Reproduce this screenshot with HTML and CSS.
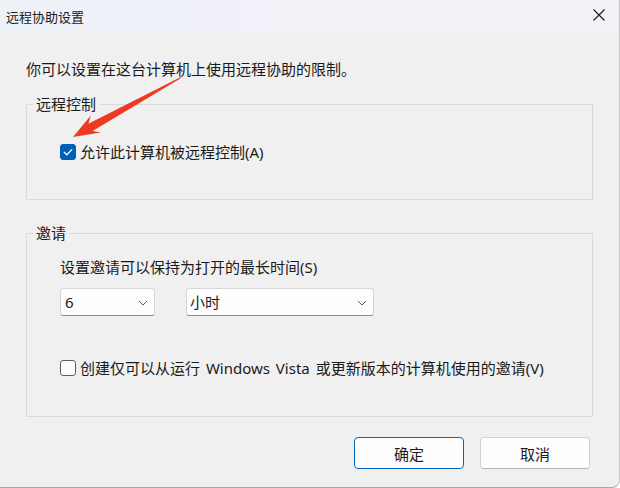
FILE: index.html
```html
<!DOCTYPE html>
<html lang="zh-CN">
<head>
<meta charset="utf-8">
<title>远程协助设置</title>
<link rel="stylesheet" href="styles.css">
</head>
<body>
<div class="window">
  <div class="titlebar">
    <span class="title">远程协助设置</span>
    <span class="close">
      <svg width="12" height="12" viewBox="0 0 12 12"><path d="M0.5 0.5 L11.5 11.5 M11.5 0.5 L0.5 11.5" stroke="#1a1a1a" stroke-width="1.1" fill="none"/></svg>
    </span>
  </div>
  <div class="content">
    <p class="intro">你可以设置在这台计算机上使用远程协助的限制。</p>

    <fieldset class="group group-remote">
      <legend>远程控制</legend>
      <label class="check-row first-row">
        <span class="box checked">
          <svg width="16" height="16" viewBox="0 0 16 16"><path d="M4.2 8.3 L6.8 10.8 L11.8 5.6" stroke="#fff" stroke-width="1.3" fill="none" stroke-linecap="round" stroke-linejoin="round"/></svg>
        </span>
        <span>允许此计算机被远程控制(A)</span>
      </label>
    </fieldset>

    <fieldset class="group group-invite">
      <legend>邀请</legend>
      <div class="invite-label">设置邀请可以保持为打开的最长时间(S)</div>
      <div class="selects">
        <div class="select select-num">
          <span>6</span>
          <svg width="10" height="6" viewBox="0 0 10 6"><path d="M1 1 L5 5 L9 1" stroke="#5a5a5a" stroke-width="1" fill="none"/></svg>
        </div>
        <div class="select select-unit">
          <span>小时</span>
          <svg width="10" height="6" viewBox="0 0 10 6"><path d="M1 1 L5 5 L9 1" stroke="#5a5a5a" stroke-width="1" fill="none"/></svg>
        </div>
      </div>
      <label class="check-row vista-row">
        <span class="box"></span>
        <span class="vista-text">创建仅可以从运行 Windows Vista 或更新版本的计算机使用的邀请(V)</span>
      </label>
    </fieldset>

    <div class="buttons">
      <button class="btn btn-default">确定</button>
      <button class="btn">取消</button>
    </div>
  </div>

  <svg class="arrow" width="620" height="488" viewBox="0 0 620 488">
    <polygon points="181.8,76.4 88.4,123.8 90.8,115.6 73,137 100.8,132.4 92.6,131.0 180.4,78.6" fill="#ee3a22"/>
  </svg>
</div>
</body>
</html>
```

FILE: styles.css
```css
html, body {
  margin: 0;
  padding: 0;
  background: #ffffff;
}

body {
  font-family: "Noto Sans", "Noto Sans CJK SC", sans-serif;
  color: #1a1a1a;
}

.window {
  position: relative;
  width: 619px;
  height: 487px;
  background: #f0f0f0;
  border-right: 1px solid #c4c4c4;
  border-bottom: 1px solid #a8a8a8;
  border-bottom-right-radius: 8px;
  overflow: hidden;
}

.titlebar {
  height: 33px;
  background: linear-gradient(90deg, #eef1f8 0%, #f2f2f8 60%, #f3f2f7 100%);
  display: flex;
  align-items: center;
  justify-content: space-between;
  padding-left: 6px;
  padding-right: 14px;
}

.title {
  font-size: 13px;
  line-height: 16px;
}

.close {
  display: flex;
  align-items: center;
  margin-top: -3px;
}

.content {
  padding-left: 26px;
}

.intro {
  margin: 26px 0 0 0;
  font-size: 15px;
  line-height: 20px;
}

.group {
  box-sizing: border-box;
  width: 567px;
  margin: 0;
  padding: 0;
  border: 1px solid #dadada;
  min-width: 0;
}

.group legend {
  margin-left: 6px;
  padding: 0 3px;
  font-size: 15px;
  line-height: 20px;
}

.group-remote {
  margin-top: 15px;
  padding-bottom: 37px;
}

.group-invite {
  margin-top: 23px;
  padding-bottom: 38px;
}

.check-row {
  display: flex;
  align-items: center;
  gap: 4px;
  padding-left: 33px;
  font-size: 15px;
  line-height: 20px;
}

.first-row {
  margin-top: 28px;
}

.vista-row {
  margin-top: 42px;
}

.vista-text {
  word-spacing: 2px;
}

.box {
  box-sizing: border-box;
  width: 16px;
  height: 16px;
  border: 1px solid #5f5f5f;
  border-radius: 3px;
  background: #fbfbfb;
  display: flex;
}

.box.checked {
  background: #005fb8;
  border-color: #005fb8;
}

.box.checked svg {
  margin: -1px;
}

.invite-label {
  margin-top: 14px;
  padding-left: 33px;
  font-size: 15px;
  line-height: 20px;
}

.selects {
  display: flex;
  gap: 31px;
  margin-top: 11px;
  padding-left: 33px;
}

.select {
  box-sizing: border-box;
  height: 28px;
  background: #fdfdfd;
  border: 1px solid #d6d6d6;
  border-bottom-color: #8e8e8e;
  border-radius: 3px;
  display: flex;
  align-items: center;
  justify-content: space-between;
  padding: 0 6px 0 4px;
  font-size: 15px;
}

.select span {
  line-height: 20px;
}

.select svg {
  margin-top: 1px;
}

.select-num {
  width: 95px;
}

.select-unit {
  width: 188px;
  padding-left: 3px;
}

.buttons {
  width: 567px;
  display: flex;
  justify-content: flex-end;
  gap: 16px;
  margin-top: 20px;
  padding-right: 3px;
  box-sizing: border-box;
}

.btn {
  box-sizing: border-box;
  width: 110px;
  height: 32px;
  background: #fdfdfd;
  border: 1px solid #d3d3d3;
  border-bottom-color: #b5b5b5;
  border-radius: 4px;
  font-family: "Noto Sans", "Noto Sans CJK SC", sans-serif;
  font-size: 15px;
  color: #1a1a1a;
  padding: 0;
}

.btn-default {
  border: 1px solid #0067c0;
}

.arrow {
  position: absolute;
  left: 0;
  top: 0;
  pointer-events: none;
}
```
